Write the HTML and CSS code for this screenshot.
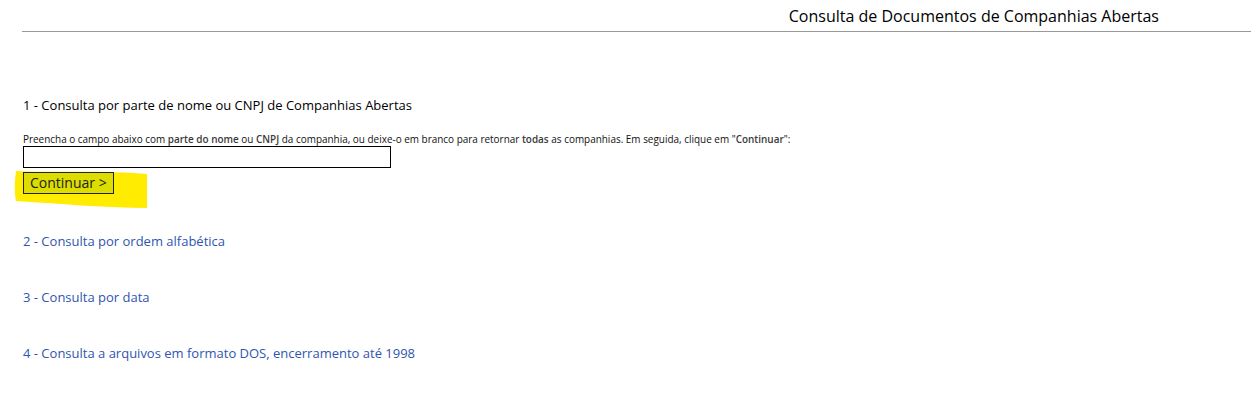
FILE: index.html
```html
<!DOCTYPE html>
<html lang="pt">
<head>
<meta charset="utf-8">
<title>Consulta de Documentos de Companhias Abertas</title>
<link rel="stylesheet" href="styles.css">
</head>
<body>
<header class="header">
  <h1 class="title">Consulta de Documentos de Companhias Abertas</h1>
</header>
<main class="content">
  <section class="search">
    <h2 class="section-title">1 - Consulta por parte de nome ou CNPJ de Companhias Abertas</h2>
    <p class="hint">Preencha o campo abaixo com <b>parte do nome</b> ou <b>CNPJ</b> da companhia, ou deixe-o em branco para retornar <b>todas</b> as companhias. Em seguida, clique em "<b>Continuar</b>":</p>
    <input class="field" type="text">
    <div class="button-wrap">
      <svg class="highlight" width="135" height="40" viewBox="0 0 135 40" aria-hidden="true">
        <path d="M2 1 C40 3 90 0 133 4 L133 38 C95 38 50 34 2 31 C0 20 1 10 2 1 Z" fill="#ffec00"/>
      </svg>
      <button class="btn" type="button">Continuar &gt;</button>
    </div>
  </section>
  <a class="link" href="#">2 - Consulta por ordem alfabética</a>
  <a class="link" href="#">3 - Consulta por data</a>
  <a class="link" href="#">4 - Consulta a arquivos em formato DOS, encerramento até 1998</a>
</main>
</body>
</html>
```
FILE: styles.css
```css
html, body {
  margin: 0;
  padding: 0;
  background: #fff;
  font-family: "Open Sans", "DejaVu Sans", sans-serif;
  color: #000;
}
.header {
  margin-left: 22px;
  height: 32px;
  border-bottom: 1px solid #999;
  display: flex;
  justify-content: flex-end;
  align-items: center;
  padding-right: 92px;
  box-sizing: border-box;
}
.title {
  margin: 0;
  font-size: 16px;
  font-weight: 400;
  line-height: 20px;
  padding-top: 1px;
}
.content {
  padding-left: 23px;
  display: flex;
  flex-direction: column;
  align-items: flex-start;
}
.search {
  margin-top: 64px;
  display: flex;
  flex-direction: column;
  align-items: flex-start;
}
.section-title {
  margin: 0;
  font-size: 13px;
  font-weight: 400;
  line-height: 18px;
}
.hint {
  margin: 19px 0 0;
  font-size: 9.95px;
  line-height: 13px;
  color: #111;
}
.hint b {
  font-weight: 600;
  color: #3a3a3a;
}
.field {
  margin: 0;
  width: 368px;
  height: 22px;
  box-sizing: border-box;
  border: 1px solid #000;
  padding: 0;
  background: #fff;
}
.button-wrap {
  position: relative;
  margin-top: 4px;
}
.highlight {
  position: absolute;
  left: -9px;
  top: -2px;
  z-index: 0;
}
.btn {
  position: relative;
  z-index: 1;
  display: block;
  font-family: "Open Sans", "DejaVu Sans", sans-serif;
  font-size: 14px;
  line-height: 18px;
  height: 22px;
  padding: 0 6px 0 6px;
  background: #dddd00;
  border: 1px solid #222;
  color: #222;
  border-radius: 0;
}
.link {
  font-size: 13px;
  line-height: 18px;
  color: #2f55b0;
  text-decoration: none;
}
.link:nth-of-type(1) { margin-top: 38px; }
.link:nth-of-type(2), .link:nth-of-type(3) { margin-top: 38px; }
```
